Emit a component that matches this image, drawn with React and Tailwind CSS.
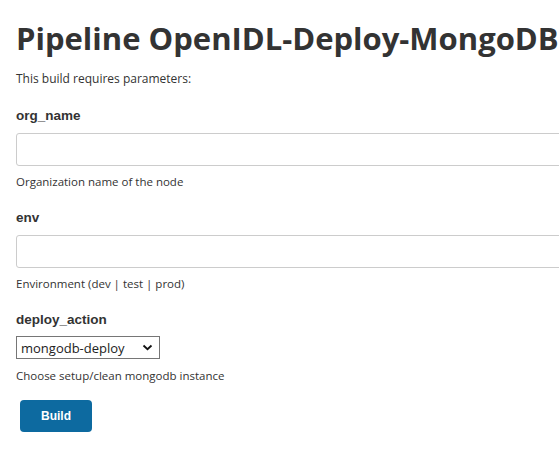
export default function App() {
  const seg = "font-['Open_Sans','Noto_Sans',sans-serif]";
  const lbl = "font-['Liberation_Sans',Arial,sans-serif] text-[13.5px] font-bold leading-[18px] text-[#333]";
  return (
    <div className={`min-h-[458px] w-[559px] overflow-hidden bg-white pl-4 text-[#333] ${seg}`}>
      <h1 className="pt-[18px] text-[31px] font-bold leading-[40px] whitespace-nowrap">
        Pipeline OpenIDL-Deploy-MongoDB
      </h1>
      <p className="mt-[12px] text-[12px] leading-[18px]">This build requires parameters:</p>

      <div className="mt-[19px]">
        <div className={lbl}>org_name</div>
        <input className="mt-[8px] block h-[33px] w-[560px] rounded-[3px] border border-[#ccc] bg-white" />
        <div className="mt-[8px] text-[11.5px] leading-[16px]">Organization name of the node</div>
      </div>

      <div className="mt-[19px]">
        <div className={lbl}>env</div>
        <input className="mt-[8px] block h-[33px] w-[560px] rounded-[3px] border border-[#ccc] bg-white" />
        <div className="mt-[8px] text-[11.5px] leading-[16px]">Environment (dev | test | prod)</div>
      </div>

      <div className="mt-[19px]">
        <div className={lbl}>deploy_action</div>
        <div className="mt-[7px] flex h-[23px] w-[144px] items-center justify-between border border-[#767676] pl-[4px] pr-[6px] text-[13px] leading-[18px] text-[#222]">
          <span>mongodb-deploy</span>
          <svg width="11" height="7" viewBox="0 0 11 7" fill="none">
            <path d="M1.5 1.5 L5.5 5.2 L9.5 1.5" stroke="#111" strokeWidth="1.8" />
          </svg>
        </div>
        <div className="mt-[9px] text-[11.5px] leading-[16px]">Choose setup/clean mongodb instance</div>
      </div>

      <button className="mt-[16px] ml-[4px] flex h-[32px] w-[72px] items-center justify-center rounded-[4px] bg-[#0d6aa0] font-['Liberation_Sans',Arial,sans-serif] text-[12px] font-bold text-white">
        Build
      </button>
    </div>
  );
}
